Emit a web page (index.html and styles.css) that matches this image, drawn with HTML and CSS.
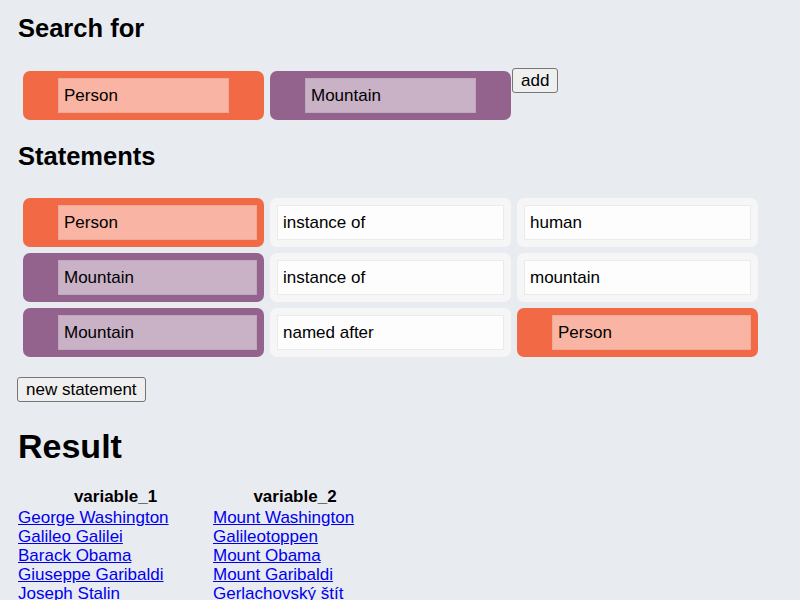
FILE: index.html
```html
<!DOCTYPE html>
<html>
<head>
<meta charset="utf-8">
<link rel="stylesheet" href="styles.css">
</head>
<body>
<h2 class="title first">Search for</h2>
<div class="search-row">
  <div class="chip chip-person chip-search"><input class="field" value="Person"></div>
  <div class="chip chip-mountain chip-search"><input class="field" value="Mountain"></div>
  <button class="btn btn-add">add</button>
</div>

<h2 class="title second">Statements</h2>
<div class="statements">
  <div class="chip chip-person"><input class="field" value="Person"></div>
  <div class="cell"><input class="field field-plain" value="instance of"></div>
  <div class="cell"><input class="field field-plain" value="human"></div>

  <div class="chip chip-mountain"><input class="field" value="Mountain"></div>
  <div class="cell"><input class="field field-plain" value="instance of"></div>
  <div class="cell"><input class="field field-plain" value="mountain"></div>

  <div class="chip chip-mountain"><input class="field" value="Mountain"></div>
  <div class="cell"><input class="field field-plain" value="named after"></div>
  <div class="chip chip-person"><input class="field" value="Person"></div>
</div>
<button class="btn btn-new">new statement</button>

<h1 class="result-title">Result</h1>
<table class="results">
  <thead>
    <tr><th class="col1">variable_1</th><th class="col2">variable_2</th></tr>
  </thead>
  <tbody>
    <tr><td><a href="#">George Washington</a></td><td><a href="#">Mount Washington</a></td></tr>
    <tr><td><a href="#">Galileo Galilei</a></td><td><a href="#">Galileotoppen</a></td></tr>
    <tr><td><a href="#">Barack Obama</a></td><td><a href="#">Mount Obama</a></td></tr>
    <tr><td><a href="#">Giuseppe Garibaldi</a></td><td><a href="#">Mount Garibaldi</a></td></tr>
    <tr><td><a href="#">Joseph Stalin</a></td><td><a href="#">Gerlachovský štít</a></td></tr>
  </tbody>
</table>
</body>
</html>
```

FILE: styles.css
```css
html, body {
  background: #e8ebf0;
}
body {
  margin: 0;
  padding: 0 18px;
  font-family: "Liberation Sans", Arial, Helvetica, sans-serif;
  font-size: 17px;
  color: #000;
}
.title {
  font-size: 25.5px;
  font-weight: bold;
  line-height: 29px;
  margin: 0;
}
.title.first {
  padding-top: 14px;
}
.title.second {
  margin-top: 22px;
}
.search-row {
  display: flex;
  align-items: flex-start;
  gap: 6px;
  margin-top: 25px;
  padding-left: 5px;
}
.chip {
  box-sizing: border-box;
  height: 49px;
  border-radius: 7px;
  padding: 7px 7px 7px 35px;
  display: flex;
}
.chip-search {
  width: 241px;
  padding: 7px 35px;
  margin-top: 3px;
}
.chip-person {
  background: #f26946;
}
.chip-mountain {
  background: #93638d;
}
.field {
  box-sizing: border-box;
  width: 100%;
  height: 35px;
  margin: 0;
  padding: 0 5px;
  border: 1px solid rgba(0, 0, 0, 0.05);
  background: rgba(255, 255, 255, 0.5);
  font-family: "Liberation Sans", Arial, Helvetica, sans-serif;
  font-size: 17px;
  color: #000;
  outline: none;
}
.field-plain {
  background: #fdfdfd;
  border-color: #ebebeb;
}
.cell {
  box-sizing: border-box;
  height: 49px;
  border-radius: 7px;
  padding: 7px;
  background: #f6f6f6;
  display: flex;
}
.statements {
  display: grid;
  grid-template-columns: repeat(3, 241px);
  grid-auto-rows: 49px;
  gap: 6px;
  margin-top: 27px;
  padding-left: 5px;
}
.btn {
  font-family: "Liberation Sans", Arial, Helvetica, sans-serif;
  font-size: 17px;
  line-height: 19px;
  color: #000;
  background: #efefef;
  border: 1px solid #767676;
  border-radius: 3px;
  padding: 2px 8px;
  margin: 0;
  box-sizing: border-box;
  height: 25px;
}
.btn-add {
  margin-left: -5px;
}
.btn-new {
  display: block;
  margin-top: 20px;
  margin-left: -1px;
}
.result-title {
  font-size: 34px;
  font-weight: bold;
  line-height: 39px;
  margin: 25px 0 0;
}
.results {
  border-collapse: collapse;
  border-spacing: 0;
  margin-top: 21px;
}
.results th {
  font-weight: bold;
  text-align: center;
  padding: 0 0 1.5px;
  line-height: 19px;
}
.results td {
  padding: 0;
  line-height: 19px;
  text-align: left;
}
.results .col1 {
  width: 195px;
}
.results .col2 {
  width: 164px;
}
.results a {
  color: #0000ee;
  text-decoration: underline;
}
```
